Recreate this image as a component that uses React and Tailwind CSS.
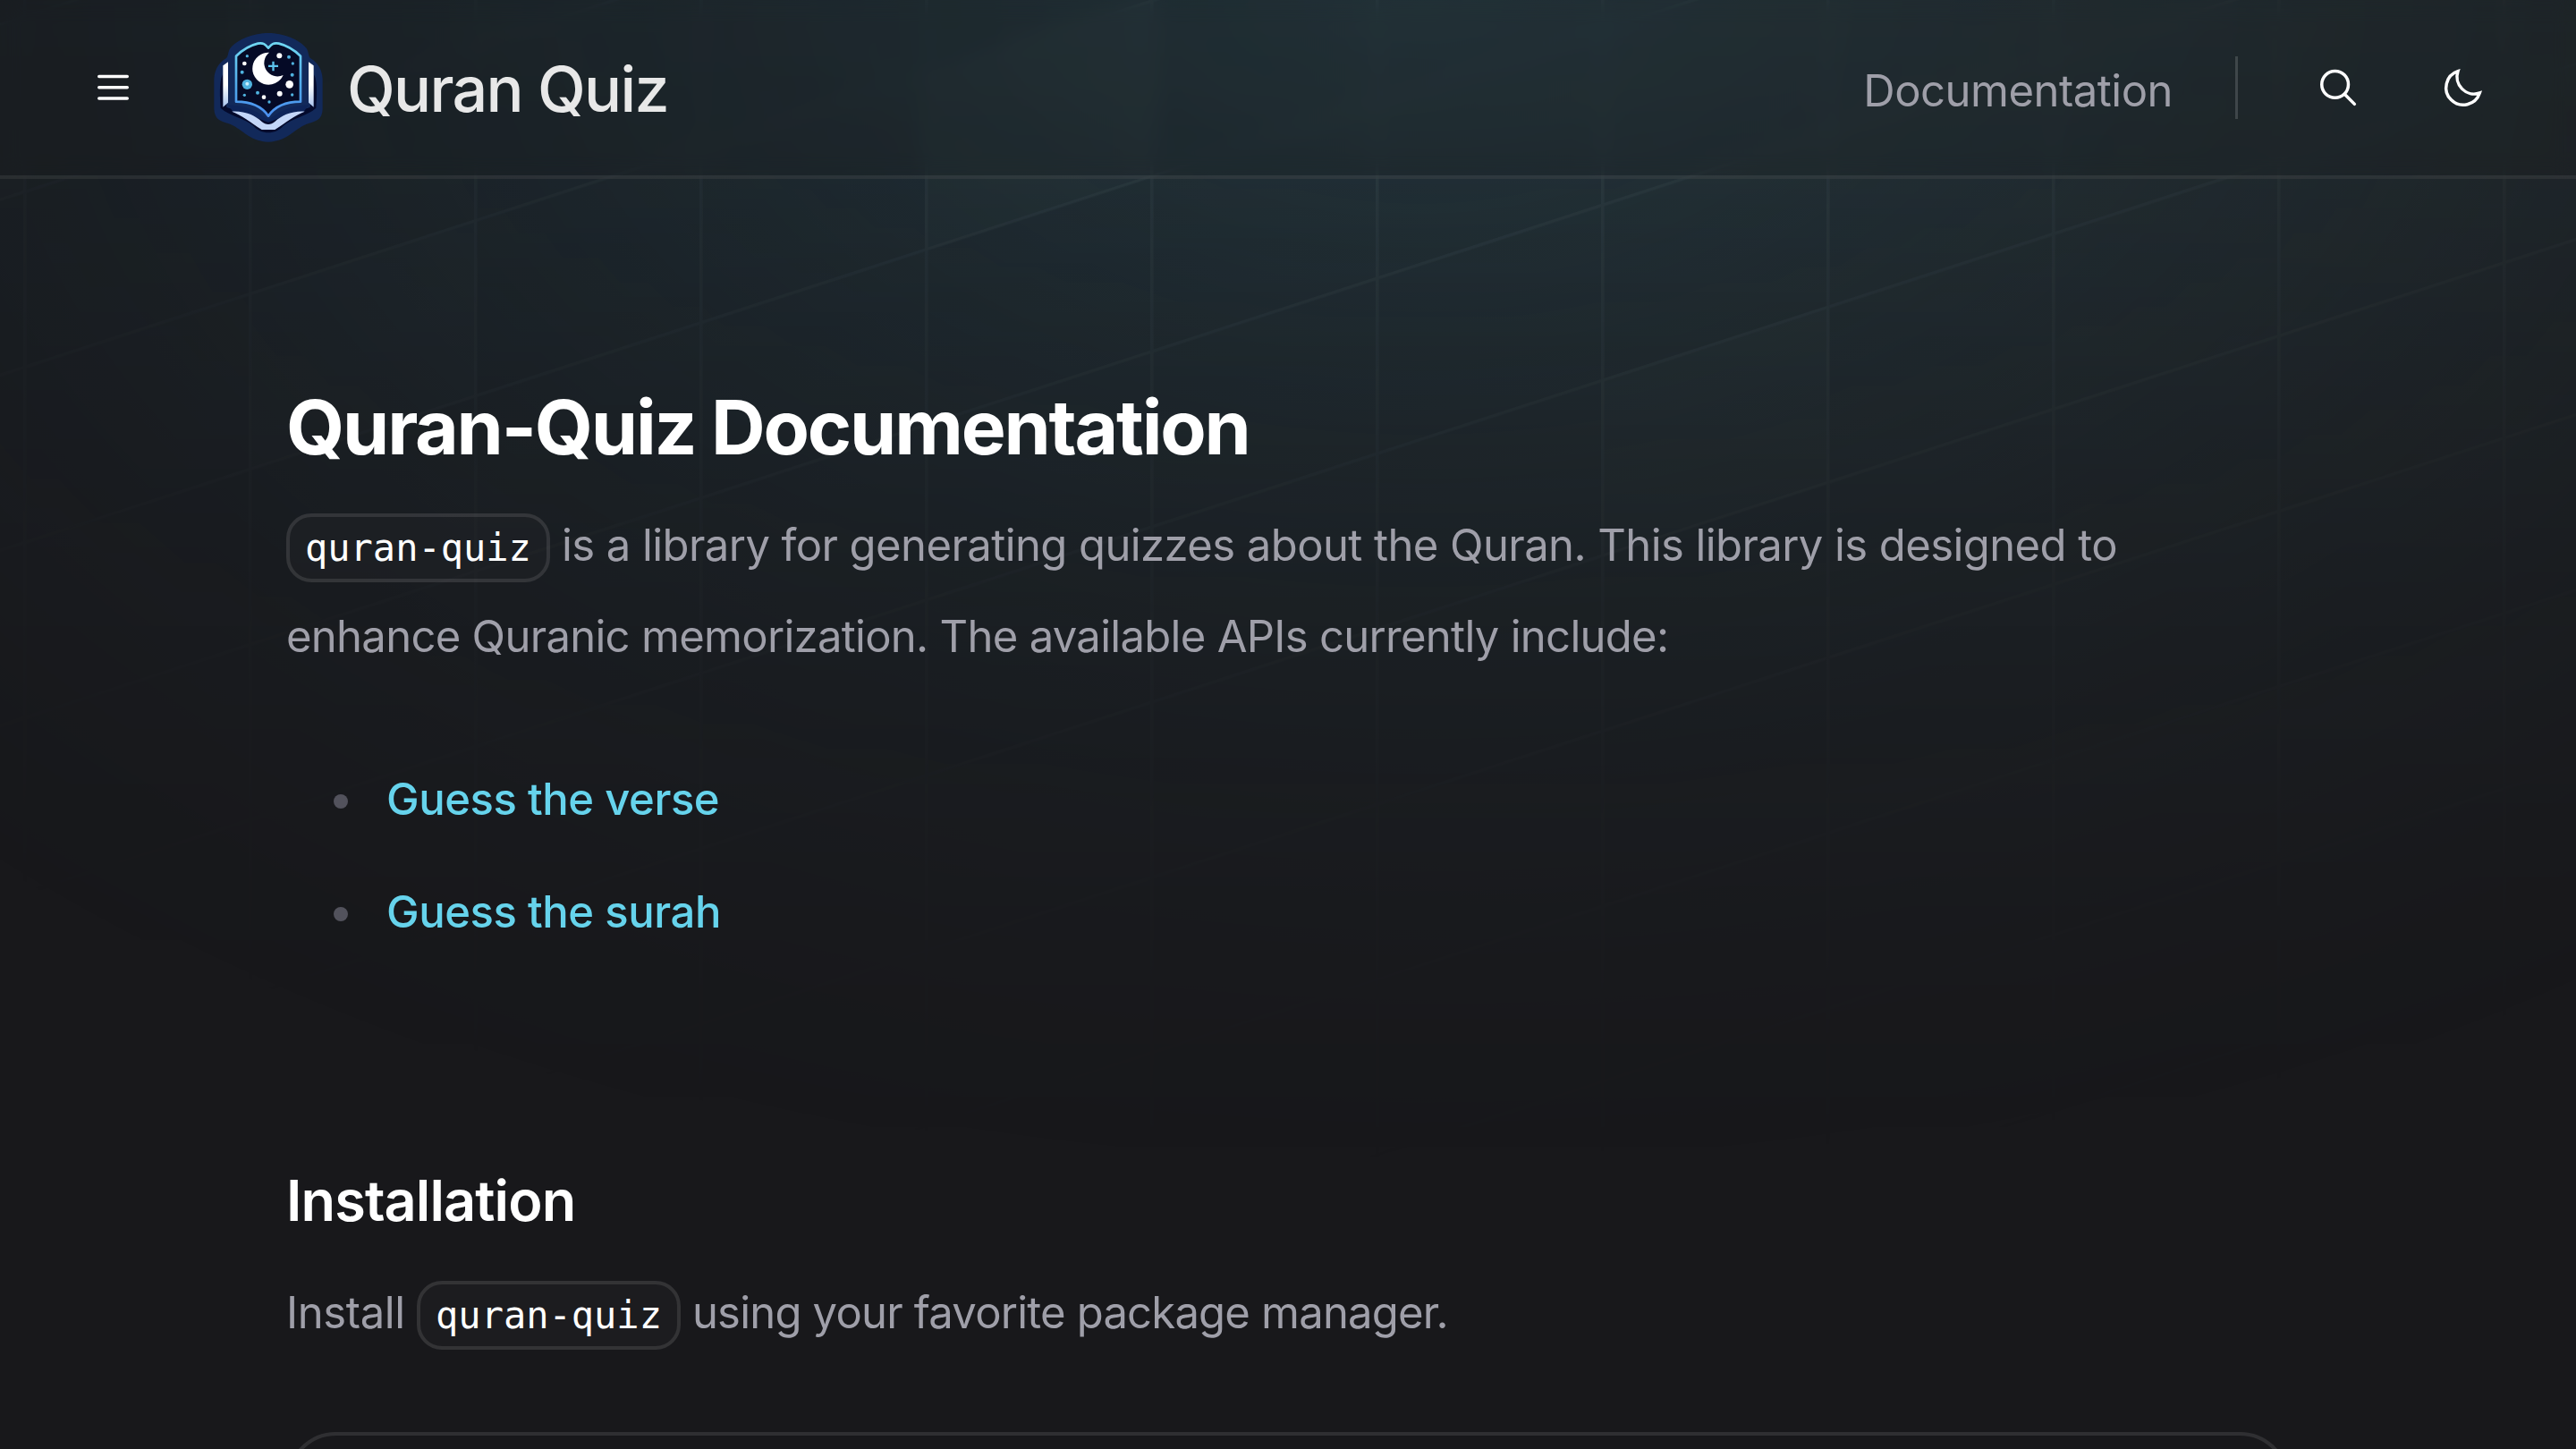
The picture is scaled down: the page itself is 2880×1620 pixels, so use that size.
import clsx from 'clsx';

const squares = [[4, 3], [2, 1], [7, 3], [10, 6]];

const HeroPattern = () => (
    <div className="pointer-events-none absolute inset-0 overflow-hidden">
        <div className="absolute top-0 left-1/2 -ml-[2128px] h-[1400px] w-[4550px] [mask-image:linear-gradient(white,transparent)]">
            <div className="absolute inset-0 bg-linear-to-r/srgb from-[#20607c]/30 to-[#5e9ca6]/30 [mask-image:radial-gradient(farthest-side_at_top,white,transparent)]">
                <svg aria-hidden="true" className="absolute inset-x-0 -inset-y-1/2 h-[200%] w-full -skew-y-[18deg] fill-white/[2%] stroke-white/[5.5%] mix-blend-overlay" strokeWidth="3.5">
                    <defs>
                        <pattern id="grid" width="252" height="196" patternUnits="userSpaceOnUse" x="-42" y="14">
                            <path d="M1.75 196V1.75H252" fill="none" />
                        </pattern>
                    </defs>
                    <rect width="100%" height="100%" strokeWidth="0" fill="url(#grid)" />
                    <svg x="-42" y="14" className="overflow-visible">
                        {squares.map(([x, y]) => (
                            <rect key={`${x}-${y}`} strokeWidth="0" width="255" height="199" x={x * 252} y={y * 196} />
                        ))}
                    </svg>
                </svg>
            </div>
        </div>
    </div>
);

const Logo = () => (
    <svg viewBox="54 45 378 378" className="size-[126px]" aria-hidden="true">
        <defs>
            <linearGradient id="frame" x1="0" y1="0" x2="0" y2="1">
                <stop offset="0" stopColor="#6fd6f2" />
                <stop offset=".6" stopColor="#4fa8ea" />
                <stop offset="1" stopColor="#4b8ff0" />
            </linearGradient>
            <linearGradient id="page" x1="0" y1="0" x2="0" y2="1">
                <stop offset=".5" stopColor="#ffffff" />
                <stop offset="1" stopColor="#a9c4ee" />
            </linearGradient>
        </defs>
        <path fill="#12295a" d="M240 51C290 51 345 72 368 102C376 114 374 130 382 136C408 152 420 175 422 205V305C421 338 405 345 375 354C330 368 305 415 240 416C175 415 150 368 105 354C75 345 60 338 58 305V205C60 175 72 152 98 136C106 130 104 114 112 102C135 72 190 51 240 51Z" />
        <path fill="#040a2c" d="M86 190C74 220 78 270 80 302C110 330 160 335 190 362C215 392 265 392 290 362C320 335 370 330 400 302C402 270 406 220 394 190L380 300L240 345L100 300Z" />
        <path fill="url(#page)" d="M88 160L105 148V284L88 299ZM392 160L375 148V284L392 299Z" />
        <path fill="#0e2459" d="M105 292C150 294 195 305 240 343C285 305 330 294 375 292L358 316C300 322 272 340 240 350C208 340 180 322 122 316Z" />
        <path fill="#c3d6f8" d="M118 314C165 312 195 328 218 348C232 360 248 360 262 348C285 328 315 312 362 314C330 326 300 350 262 375H218C180 350 150 326 118 314Z" />
        <path fill="#050a26" stroke="url(#frame)" strokeWidth="8" strokeLinejoin="round" d="M132 128C155 106 180 92 205 86C224 82 230 90 240 101C250 90 256 82 275 86C300 92 325 106 348 128V281C300 281 262 297 240 329C218 297 180 281 132 281Z" />
        <path fill="#fff" d="M243 116A54 54 0 1 0 290 192A45 45 0 0 1 243 116Z" />
        <path fill="#5cc3ee" d="M253 146H260V158H273V165H260V178H253V165H240V158H253Z" />
        <g fill="#fff">
            <circle cx="277" cy="127" r="9" />
            <circle cx="160" cy="153" r="7" />
            <circle cx="311" cy="223" r="13" />
            <circle cx="278" cy="254" r="9" />
            <circle cx="225" cy="266" r="7" />
        </g>
        <g fill="#4fb2df">
            <circle cx="169" cy="223" r="17" />
            <circle cx="169" cy="128" r="5" />
            <circle cx="309" cy="131" r="6" />
            <circle cx="322" cy="153" r="5" />
            <circle cx="152" cy="182" r="6" />
            <circle cx="320" cy="191" r="6" />
            <circle cx="204" cy="251" r="6" />
            <circle cx="160" cy="259" r="5" />
            <circle cx="320" cy="258" r="5" />
            <circle cx="243" cy="282" r="5" />
        </g>
        <circle cx="169" cy="221" r="6" fill="#c8efff" />
    </svg>
);

const IconButton = ({ label, className, children }) => (
    <button aria-label={label} className={clsx('flex size-[84px] items-center justify-center stroke-white', className)}>
        {children}
    </button>
);

const Header = () => (
    <header className="relative flex h-[200px] items-center border-b-4 border-white/[7.5%] bg-zinc-900/20 px-[84px] backdrop-blur-md">
        <IconButton label="Toggle navigation">
            <svg viewBox="0 0 10 9" fill="none" strokeLinecap="round" className="w-[35px]">
                <path d="M.5 1h9M.5 8h9M.5 4.5h9" />
            </svg>
        </IconButton>
        <a href="#" className="ml-[70px] flex items-center gap-6">
            <Logo />
            <span className="pt-1 text-[70px] leading-[98px] font-medium tracking-[-1.7px] text-[#e8e8e8]">Quran Quiz</span>
        </a>
        <nav className="ml-auto flex items-center">
            <a href="#" className="pt-2 text-[49px] leading-[70px] tracking-[-0.5px] text-zinc-400">Documentation</a>
            <div className="ml-[70px] h-[70px] w-[3px] bg-white/15" />
            <IconButton label="Find something" className="ml-[70px]">
                <svg viewBox="0 0 20 20" fill="none" strokeLinecap="round" className="size-[70px]">
                    <path d="M12.01 12a4.25 4.25 0 1 0-6.02-6 4.25 4.25 0 0 0 6.02 6Zm0 0 3.24 3.25" />
                </svg>
            </IconButton>
            <IconButton label="Toggle theme" className="ml-14">
                <svg viewBox="0 0 20 20" fill="none" className="size-[70px]">
                    <path d="M15.224 11.724a5.5 5.5 0 0 1-6.949-6.949 5.5 5.5 0 1 0 6.949 6.949Z" />
                </svg>
            </IconButton>
        </nav>
    </header>
);

const Code = ({ children }) => (
    <code className="rounded-[28px] border-4 border-white/10 bg-zinc-800/25 px-[17px] py-[10px] font-['DejaVu_Sans_Mono',monospace] text-[42px] leading-none tracking-normal text-white">
        {children}
    </code>
);

const links = ['Guess the verse', 'Guess the surah'];

const App = () => {
    return (
        <div className="relative h-[1620px] overflow-hidden bg-zinc-900 font-['Inter',sans-serif] antialiased">
            <HeroPattern />
            <Header />
            <main className="relative mx-auto w-[2240px] pt-[222px] text-[49px] leading-[102px] text-zinc-400">
                <h1 className="text-[84px] leading-[112px] font-bold tracking-[-2.2px] text-white">Quran-Quiz Documentation</h1>
                <p className="mt-[25px] tracking-[-0.58px]">
                    <Code>quran-quiz</Code> is a library for generating quizzes about the Quran. This library is designed to{' '}
                    <span className="tracking-[-0.71px]">enhance Quranic memorization. The available APIs currently include:</span>
                </p>
                <ul className="mt-[82px] flex flex-col gap-7 pl-[53px]">
                    {links.map((link) => (
                        <li key={link} className="flex items-center gap-[43px] leading-[98px]">
                            <span className="mt-1 size-4 rounded-full bg-zinc-600" />
                            <a href="#" className="font-medium tracking-[-0.45px] text-[#66d3ec]">{link}</a>
                        </li>
                    ))}
                </ul>
                <h2 className="mt-[224px] text-[63px] leading-[98px] font-semibold tracking-[-0.9px] text-white">Installation</h2>
                <p className="mt-[26px] tracking-[-0.8px]">
                    <span className="tracking-[-0.4px]">Install </span>
                    <Code>quran-quiz</Code> using your favorite package manager.
                </p>
                <div className="mt-[82px] h-[400px] rounded-[56px] border-4 border-white/10" />
            </main>
        </div>
    );
};

export default App;
